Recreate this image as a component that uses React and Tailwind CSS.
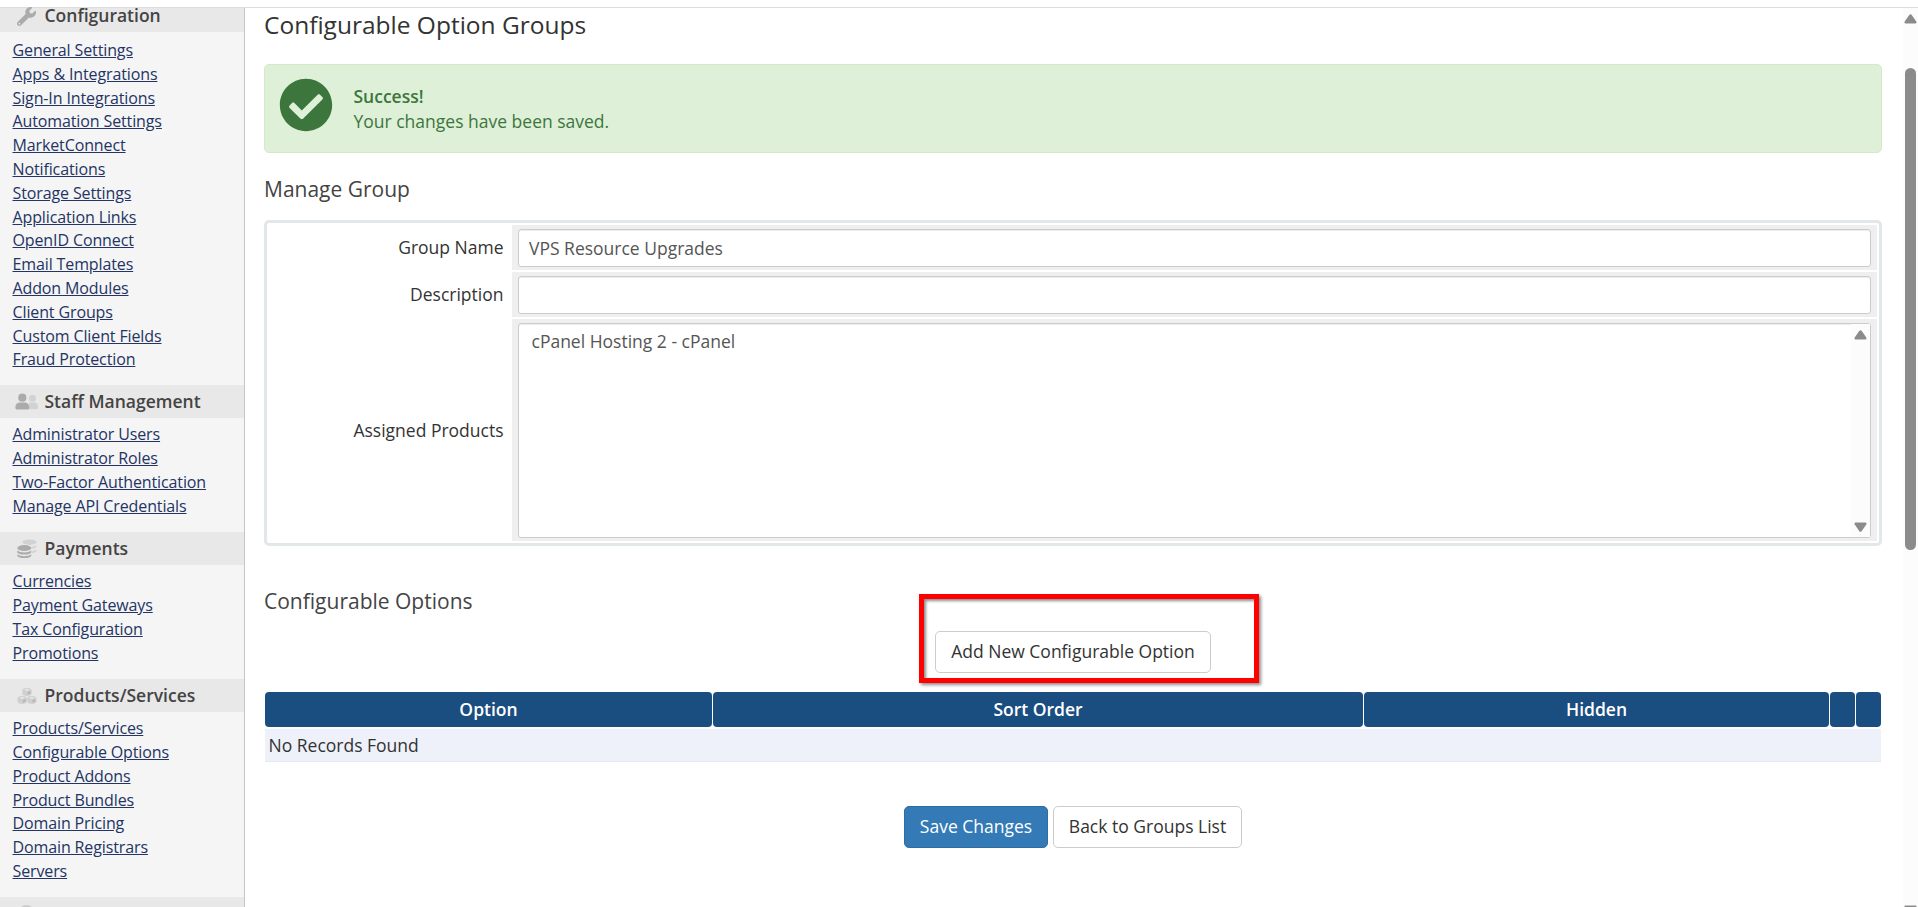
import React from "react";
import { FaWrench, FaCheckCircle } from "react-icons/fa";

const sections = [
  {
    title: "Configuration",
    icon: "wrench",
    box: "h-[377px]",
    links: [
      "General Settings",
      "Apps & Integrations",
      "Sign-In Integrations",
      "Automation Settings",
      "MarketConnect",
      "Notifications",
      "Storage Settings",
      "Application Links",
      "OpenID Connect",
      "Email Templates",
      "Addon Modules",
      "Client Groups",
      "Custom Client Fields",
      "Fraud Protection",
    ],
  },
  {
    title: "Staff Management",
    icon: "users",
    box: "h-[147px]",
    links: [
      "Administrator Users",
      "Administrator Roles",
      "Two-Factor Authentication",
      "Manage API Credentials",
    ],
  },
  {
    title: "Payments",
    icon: "coins",
    box: "h-[147px]",
    links: ["Currencies", "Payment Gateways", "Tax Configuration", "Promotions"],
  },
  {
    title: "Products/Services",
    icon: "cubes",
    box: "h-[218px]",
    links: [
      "Products/Services",
      "Configurable Options",
      "Product Addons",
      "Product Bundles",
      "Domain Pricing",
      "Domain Registrars",
      "Servers",
    ],
  },
];

const SectionIcon = ({ name }) => {
  if (name === "wrench") return <FaWrench className="w-[19px] h-[19px] text-[#ababab]" />;
  if (name === "users")
    return (
      <svg viewBox="0 0 24 18" className="w-6 h-[18px]">
        <g fill="#d2d2d2">
          <circle cx="17.5" cy="5.3" r="3.5" />
          <path d="M14 16.3V9.6h5.5c2 0 3.5 1.800 3.500 4v1.200c0 .9-.6 1.500-1.500 1.500z" />
        </g>
        <g fill="#ababab">
          <circle cx="7.300" cy="4.700" r="4.100" />
          <path d="M5 9.600h4.600c2.700 0 4.600 1.900 4.600 4.500v1c0 .8-.6 1.400-1.400 1.400H1.800c-.8 0-1.400-.6-1.400-1.400v-1c0-2.600 1.900-4.500 4.600-4.500z" />
        </g>
      </svg>
    );
  if (name === "coins")
    return (
      <svg viewBox="0 0 20 20" className="w-5 h-5">
        <g fill="#d2d2d2">
          <ellipse cx="12.500" cy="3.200" rx="7" ry="2.700" />
          <path d="M14.500 8c2.300-.3 4-1 4.800-1.900v1.500c0 1-1.900 1.900-4.800 2.200zM15 12.300c2-.3 3.500-.9 4.300-1.700v1.500c0 1-1.700 1.800-4.300 2.100z" />
        </g>
        <g fill="#ababab">
          <ellipse cx="7.300" cy="9" rx="7" ry="3" />
          <path d="M.3 11.500c1.400 1.300 4 1.900 7 1.900s5.600-.6 7-1.900v1.400c0 1.500-3.100 2.600-7 2.600s-7-1.100-7-2.600zM.3 15.300c1.400 1.300 4 1.900 7 1.900s5.600-.6 7-1.900v1.200c0 1.500-3.100 2.600-7 2.600s-7-1.100-7-2.600z" />
        </g>
      </svg>
    );
  return (
    <svg viewBox="0 0 20 18" className="w-5 h-[18px]">
      {[
        [10, 0.8],
        [5.2, 8.8],
        [14.8, 8.8],
      ].map(([x, y]) => (
        <g key={`${x}-${y}`} transform={`translate(${x} ${y})`}>
          <path
            d="M-3.200.7-.5-.1h1l2.700.8 1.400 1.200v4.200L3.300 7.400.5 8.300h-1l-2.800-.9-1.300-1.300V1.900z"
            fill="#cfcfcf"
          />
          <path d="M0 .9 3 1.900 0 3.100-3 1.900z" fill="#e6e6e6" />
          <path d="M.7 4.400 3.400 3.300v2.400L.7 6.700z" fill="#b4b4b4" />
        </g>
      ))}
    </svg>
  );
};

const Sidebar = () => (
  <aside className="w-[245px] shrink-0 h-full bg-[#f5f5f5] border-r border-[#c4c6c8]">
    {sections.map((s, i) => (
      <div key={s.title} className={s.box}>
        <div
          className={`flex items-center bg-[#e8e8e8] pl-[15px] ${
            i === 0 ? "h-[24px] pb-[8px]" : "h-[33px]"
          }`}
        >
          <span className="w-[29.500px] shrink-0 flex items-center">
            <span className={s.icon === "users" ? "" : "pl-[2px]"}>
              <SectionIcon name={s.icon} />
            </span>
          </span>
          <h4 className="text-[17.500px] leading-[16px] pb-[2px] font-semibold text-[#444]">
            {s.title}
          </h4>
        </div>
        <ul className={`pl-[12.500px] ${i === 0 ? "pt-[7px]" : "pt-[5.300px]"}`}>
          {s.links.map((l) => (
            <li
              key={l}
              className="text-[16px] tracking-[-0.120px] leading-[23.800px] text-[#243464]"
            >
              <a href="#" className="underline whitespace-nowrap">
                {l}
              </a>
            </li>
          ))}
        </ul>
      </div>
    ))}
    <div className="h-[10px] bg-[#e8e8e8] pl-[18px] pt-[8px] overflow-hidden">
      <div className="w-[17px] h-[17px] rounded-full bg-[#cccccc]" />
    </div>
  </aside>
);

const Arrow = ({ down }) => (
  <svg viewBox="0 0 13 10" className={`w-[13px] h-[10px] shrink-0 ${down ? "rotate-180" : ""}`}>
    <path
      d="M5.400.7c.5-.7 1.700-.7 2.200 0l4.700 6.800c.6.900.1 2-.9 2H1.600c-1 0-1.500-1.100-.9-2z"
      fill="#8b8b8b"
    />
  </svg>
);

const Field = ({ label, height, children }) => (
  <div className={`flex ${height}`}>
    <label className="w-[243px] shrink-0 pr-[8.500px] flex items-center justify-end text-[#333]">
      {label}
    </label>
    <div className="flex-1 bg-[#efefef] px-[6px] pt-[4px] pb-[3px]">{children}</div>
  </div>
);

const inputStyle =
  "block w-full h-full bg-white border border-[#ccc] rounded-[3px] shadow-[inset_0_1px_1px_rgba(0,0,0,0.075)] text-[#555]";

const Th = ({ className, children }) => (
  <div
    className={`h-[35px] rounded-[4px] bg-[#1a4d80] text-white font-semibold text-center leading-[34px] ${className}`}
  >
    {children}
  </div>
);

const App = () => {
  return (
    <div
      className="w-[1918px] h-[907px] overflow-hidden bg-white flex flex-col text-[17.500px] text-[#333]"
      style={{ fontFamily: '"Open Sans", sans-serif' }}
    >
      <div className="h-[8px] shrink-0 border-b border-[#dcdcdc]" />

      <div className="flex flex-1 min-h-0">
        <Sidebar />

        <main className="flex-1 min-w-0 pl-[19px] pr-[21px]">
          <h1 className="h-[56px] text-[24.500px] leading-[33px] text-[#333]">
            Configurable Option Groups
          </h1>

          {/* Success message */}
          <div className="h-[89px] flex rounded-[5px] border border-[#d6e9c6] bg-[#dff0d8] text-[#3c763d] pl-[14px] pt-[13px]">
            <FaCheckCircle className="w-[54px] h-[54px] shrink-0" />
            <div className="pl-[20.500px] pt-[6px] leading-[25px]">
              <p className="font-semibold">Success!</p>
              <p>Your changes have been saved.</p>
            </div>
          </div>

          <h2 className="h-[67px] pt-[21px] text-[21px] leading-[30px] text-[#444]">
            Manage Group
          </h2>

          {/* Group form */}
          <div className="h-[326px] border-[3px] border-[#e2e7e9] rounded-[5px] p-[2px] flex flex-col gap-[2px]">
            <Field label="Group Name" height="h-[45px]">
              <input
                className={`${inputStyle} px-[10px]`}
                defaultValue="VPS Resource Upgrades"
              />
            </Field>
            <Field label="Description" height="h-[45px]">
              <input className={`${inputStyle} px-[10px]`} />
            </Field>
            <Field label="Assigned Products" height="h-[222px]">
              <div className={`${inputStyle} flex justify-between`}>
                <div className="pl-[12.500px] pt-[5px] leading-[24px]">
                  cPanel Hosting 2 - cPanel
                </div>
                <div className="w-[19px] flex flex-col items-center justify-between pt-[6px] pb-[5px] bg-[#fcfcfc]">
                  <Arrow />
                  <Arrow down />
                </div>
              </div>
            </Field>
          </div>

          <h2 className="h-[85px] pt-[40px] text-[21px] leading-[30px] text-[#444]">
            Configurable Options
          </h2>

          <div className="relative h-[61px] flex justify-center items-start">
            <button className="w-[276px] h-[42px] pb-px border border-[#ccc] rounded-[5px] bg-white whitespace-nowrap">
              Add New Configurable Option
            </button>
            <div className="absolute left-[655px] top-[-37px] w-[340px] h-[89px] border-[5px] border-[#fe0000] shadow-[2px_2px_3px_rgba(0,0,0,0.45),inset_2px_2px_3px_rgba(0,0,0,0.45)]" />
          </div>

          {/* Options table */}
          <div className="px-px">
            <div className="flex gap-px">
              <Th className="w-[447px]">Option</Th>
              <Th className="w-[650px]">Sort Order</Th>
              <Th className="flex-1">Hidden</Th>
              <Th className="w-[25px]" />
              <Th className="w-[25px]" />
            </div>
            <div className="mt-[2px] h-[33px] bg-[#eef1fa] border-b border-[#e8e8ec] pl-[3.500px] leading-[32px]">
              No Records Found
            </div>
          </div>

          <div className="mt-[44px] flex justify-center gap-[5px]">
            <button className="w-[144px] h-[42px] pb-px rounded-[5px] border border-[#2e6da4] bg-[#337ab7] text-white whitespace-nowrap">
              Save Changes
            </button>
            <button className="w-[189px] h-[42px] pb-px rounded-[5px] border border-[#ccc] bg-white whitespace-nowrap">
              Back to Groups List
            </button>
          </div>
        </main>

        {/* Page scrollbar */}
        <div className="w-[15px] shrink-0 bg-[#fcfcfc] flex flex-col items-center pt-[6px] overflow-hidden">
          <Arrow />
          <div className="mt-[44px] w-[11px] h-[482px] shrink-0 rounded-full bg-[#8b8b8b]" />
          <div className="mt-[355px] shrink-0">
            <Arrow down />
          </div>
        </div>
      </div>
    </div>
  );
};

export default App;
